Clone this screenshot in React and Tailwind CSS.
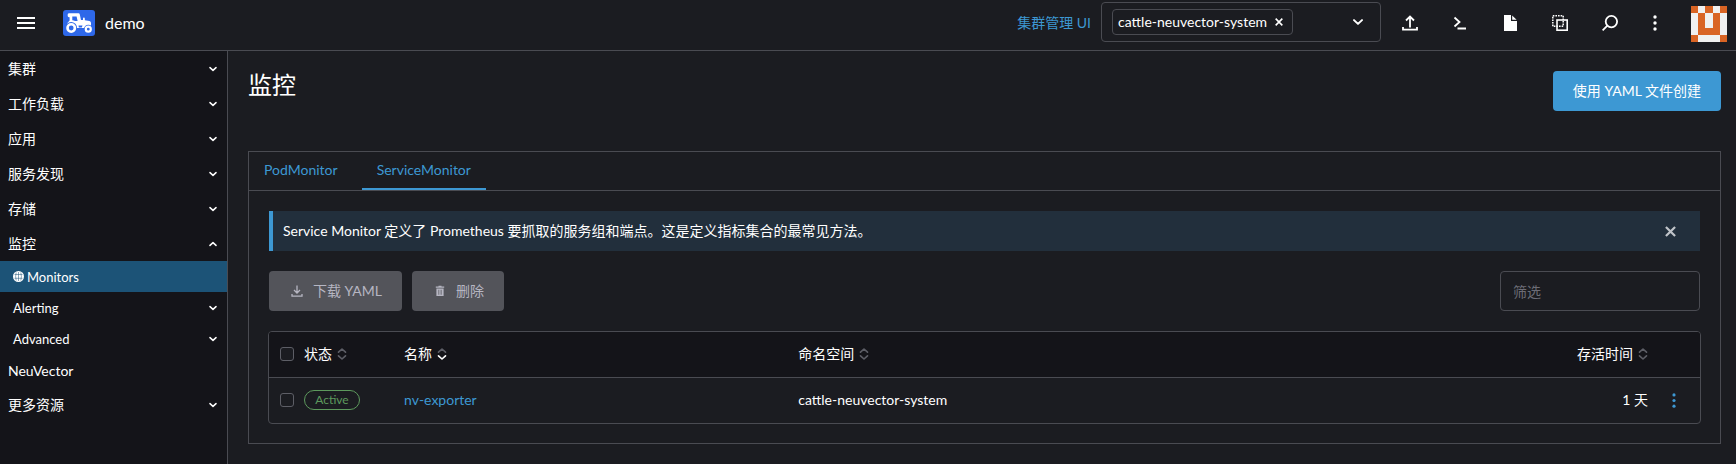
import { useState } from "react";

const navGroups = [
    { label: "集群" },
    { label: "工作负载" },
    { label: "应用" },
    { label: "服务发现" },
    { label: "存储" },
    {
        label: "监控",
        open: true,
        children: [
            { label: "Monitors", active: true },
            { label: "Alerting", expandable: true },
            { label: "Advanced", expandable: true },
        ],
    },
    { label: "NeuVector", leaf: true },
    { label: "更多资源" },
];

const rows = [
    { state: "Active", name: "nv-exporter", namespace: "cattle-neuvector-system", age: "1 天" },
];

function Chevron({ up, className }) {
    return (
        <svg className={className} viewBox="0 0 8 6" fill="none" stroke="currentColor" strokeWidth="1.5" strokeLinecap="round" strokeLinejoin="round">
            <path d={up ? "M1 4.4L4 1.6L7 4.4" : "M1 1.6L4 4.4L7 1.6"} />
        </svg>
    );
}

function CloseIcon({ className }) {
    return (
        <svg className={className} viewBox="0 0 12 12" fill="none" stroke="currentColor" strokeWidth="2.4">
            <path d="M1 1L11 11M11 1L1 11" />
        </svg>
    );
}

function SortIcon({ direction }) {
    return (
        <svg className="h-3 w-[10px] text-[#5d5e66]" viewBox="0 0 10 12" fill="none" strokeWidth="1.6" strokeLinecap="round" strokeLinejoin="round">
            <path stroke="currentColor" d="M1.5 4.2L5 1L8.5 4.2" />
            <path stroke={direction === "down" ? "#fff" : "currentColor"} d="M1.5 7.8L5 11L8.5 7.8" />
        </svg>
    );
}

function Dots({ className }) {
    return (
        <svg className={className} viewBox="0 0 4 16" fill="currentColor">
            <circle cx="2" cy="2" r="1.7" />
            <circle cx="2" cy="8" r="1.7" />
            <circle cx="2" cy="14" r="1.7" />
        </svg>
    );
}

function Logo() {
    return (
        <svg className="h-[26px] w-8" viewBox="0 0 32 26">
            <rect width="32" height="26" rx="3" fill="#2e68e9" />
            <path d="M6 3.3H15.5Q16.6 3.3 16.8 4.4L18 10H20V8.4Q20 7.6 20.9 7.6T21.8 8.4V10.2L26.5 11Q28 11.3 28 13V18H12L4 13.5L6.6 10.5V7.2H6Q4.6 7.2 4.6 5.2T6 3.3Z" fill="#fff" />
            <path d="M9.3 6.6H13.6L14.6 11H12Q10.8 10.2 9.3 10.2Z" fill="#2e68e9" />
            <path d="M15.5 15.5H19.5L18.8 17.5H15.8Z" fill="#2e68e9" />
            <circle cx="8.2" cy="18" r="5.9" fill="#2e68e9" />
            <circle cx="8.2" cy="18" r="3.7" fill="none" stroke="#fff" strokeWidth="2.6" />
            <circle cx="25.3" cy="19.2" r="4.4" fill="#2e68e9" />
            <circle cx="25.3" cy="19.2" r="2.5" fill="none" stroke="#fff" strokeWidth="2.2" />
        </svg>
    );
}

function Avatar() {
    return (
        <svg className="h-9 w-9" viewBox="0 0 36 36" shapeRendering="crispEdges">
            <rect width="36" height="36" fill="#f0f0f0" />
            <path fill="#d96424" d="M0 0H7V7H0ZM14 0H22V7H14ZM29 0H36V7H29ZM7 7H14V22H22V7H29V29H7ZM0 29H7V36H0ZM29 29H36V36H29Z" />
        </svg>
    );
}

const tools = [
    {
        label: "导入 YAML",
        icon: <path d="M8 12.5V2M4 5.5L8 1.5L12 5.5M1 12V14.6H15V12" fill="none" stroke="currentColor" strokeWidth="1.8" />,
    },
    {
        label: "Kubectl Shell",
        icon: <path d="M2.5 2.5L7.5 7L2.5 11.5M5.5 13.5H14" fill="none" stroke="currentColor" strokeWidth="1.8" />,
    },
    {
        label: "下载 KubeConfig",
        icon: <path d="M2 0H9V6H15V16H2ZM10.2 0.4L14.6 4.8H10.2Z" fill="currentColor" />,
    },
    {
        label: "复制 KubeConfig",
        icon: (
            <g fill="none" stroke="currentColor">
                <rect x="0.8" y="0.8" width="10.4" height="10.4" strokeWidth="1.5" strokeDasharray="1.6 1" />
                <rect x="5" y="5" width="10.2" height="10.2" strokeWidth="1.6" />
            </g>
        ),
    },
    {
        label: "资源搜索",
        icon: (
            <g fill="none" stroke="currentColor" strokeWidth="1.8">
                <circle cx="9.4" cy="6.6" r="5.7" />
                <path d="M5.4 10.6L0.6 15.4" />
            </g>
        ),
    },
];

function Header() {
    return (
        <header className="flex h-[51px] items-center border-b border-[#4a4b52] pr-[9px] pl-[17px]">
            <button type="button" aria-label="菜单" className="mb-1">
                <svg className="h-3 w-[18px]" viewBox="0 0 18 12" fill="currentColor">
                    <path d="M0 0H18V2H0ZM0 5H18V7H0ZM0 10H18V12H0Z" />
                </svg>
            </button>
            <a href="#home" className="mb-1 ml-7 flex items-center gap-[10px] text-base">
                <Logo />
                demo
            </a>

            <a href="#cluster" className="mb-1 ml-auto text-[#3d98d3]">集群管理 UI</a>

            {/* Namespace filter */}
            <div className="mb-[7px] ml-[10px] flex h-10 w-[280px] items-center rounded border border-[#4a4b52] pl-[10px]">
                <span className="flex h-[26px] items-center gap-2 rounded border border-[#4a4b52] px-[5px] whitespace-nowrap">
                    cattle-neuvector-system
                    <button type="button" aria-label="移除" className="pr-1">
                        <CloseIcon className="h-2 w-2" />
                    </button>
                </span>
                <select aria-label="命名空间" className="h-full min-w-0 flex-1 appearance-none bg-transparent">
                    <option value=""></option>
                    <option className="text-black" value="all">全部</option>
                </select>
                <Chevron className="pointer-events-none mr-4 h-2 w-3" />
            </div>

            <div className="mb-1 ml-[9px] flex items-center gap-[10px]">
                {tools.map((tool) => (
                    <button key={tool.label} type="button" aria-label={tool.label} className="flex h-10 w-10 items-center justify-center">
                        <svg className="h-4 w-4" viewBox="0 0 16 16">{tool.icon}</svg>
                    </button>
                ))}
            </div>
            <button type="button" aria-label="更多" className="mb-1 flex h-10 w-[50px] items-center justify-center">
                <Dots className="h-4 w-1" />
            </button>
            <button type="button" aria-label="用户" className="mb-[2px] ml-[11px]">
                <Avatar />
            </button>
        </header>
    );
}

function SideNav() {
    return (
        <nav className="w-[228px] shrink-0 border-r border-[#4a4b52] bg-[#141419]">
            {navGroups.map((group) => (
                <div key={group.label}>
                    {group.leaf ? (
                        <a href={"#" + group.label} className="flex h-[33px] items-center pl-2">{group.label}</a>
                    ) : (
                        <button type="button" className="flex h-[35px] w-full items-center justify-between pr-[10px] pl-2">
                            {group.label}
                            <Chevron up={group.open} className="h-[6px] w-2" />
                        </button>
                    )}
                    {group.children?.map((item) => (
                        <a
                            key={item.label}
                            href={"#" + item.label}
                            className={
                                item.active
                                    ? "flex h-[31px] items-center gap-[3px] bg-[#1c5377] pr-[10px] pl-[13px] text-[13px]"
                                    : "flex h-[31px] items-center justify-between pr-[10px] pl-[13px] text-[13px]"
                            }
                        >
                            {item.active && (
                                <svg className="h-[11px] w-[11px]" viewBox="0 0 11 11">
                                    <circle cx="5.5" cy="5.5" r="5.5" fill="#fff" />
                                    <path d="M1.5 3.5H9.5M1.5 7.3H9.5M5.5 1V10M3.2 1.5Q2 5.5 3.2 9.5M7.8 1.5Q9 5.5 7.8 9.5" stroke="#1c5377" strokeWidth="0.5" fill="none" />
                                </svg>
                            )}
                            {item.label}
                            {item.expandable && <Chevron className="h-[6px] w-2" />}
                        </a>
                    ))}
                </div>
            ))}
        </nav>
    );
}

function Checkbox({ label }) {
    return (
        <input
            type="checkbox"
            aria-label={label}
            className="block h-[14px] w-[14px] appearance-none rounded-[3px] border border-[#5d5e66] bg-[#1b1c21] checked:bg-[#3d98d3]"
        />
    );
}

function MonitorTable() {
    return (
        <div className="-mx-px mt-5 overflow-hidden rounded border border-[#4a4b52]">
            <table className="w-full table-fixed text-left">
                <thead className="bg-[#141419]">
                    <tr className="h-[45px] border-b border-[#4a4b52]">
                        <th className="w-[35px] pl-[11px]"><Checkbox label="全选" /></th>
                        <th className="w-[100px] font-normal">
                            <button type="button" className="flex items-center gap-[5px]">状态<SortIcon /></button>
                        </th>
                        <th className="font-normal">
                            <button type="button" className="flex items-center gap-[5px]">名称<SortIcon direction="down" /></button>
                        </th>
                        <th className="w-[51%] font-normal">
                            <button type="button" className="flex items-center gap-[5px]">命名空间<SortIcon /></button>
                        </th>
                        <th className="w-[120px] font-normal">
                            <button type="button" className="ml-auto flex items-center gap-[5px]">存活时间<SortIcon /></button>
                        </th>
                        <th className="w-[52px]"></th>
                    </tr>
                </thead>
                <tbody>
                    {rows.map((row) => (
                        <tr key={row.name} className="h-[46px]">
                            <td className="pl-[11px]"><Checkbox label={row.name} /></td>
                            <td>
                                <span className="flex h-5 w-14 items-center justify-center rounded-full border border-[#5d995d] text-xs text-[#5d995d]">{row.state}</span>
                            </td>
                            <td><a href="#nv-exporter" className="text-[#3d98d3]">{row.name}</a></td>
                            <td>{row.namespace}</td>
                            <td className="text-right">{row.age}</td>
                            <td>
                                <button type="button" aria-label="操作" className="mx-auto flex w-6 justify-center text-[#3d98d3]">
                                    <Dots className="h-[15px] w-1" />
                                </button>
                            </td>
                        </tr>
                    ))}
                </tbody>
            </table>
        </div>
    );
}

function App() {
    const [tab, setTab] = useState("ServiceMonitor");
    const [showBanner, setShowBanner] = useState(true);

    return (
        <div className="flex min-h-screen flex-col bg-[#1b1c21] font-['Lato','Noto_Sans_CJK_SC',sans-serif] text-sm leading-5 text-white">
            <Header />
            <div className="flex flex-1">
                <SideNav />
                <main className="min-w-0 flex-1 pt-5 pr-[15px] pb-5 pl-5">
                    <div className="flex items-start justify-between">
                        <h1 className="text-2xl leading-7">监控</h1>
                        <button type="button" className="h-10 rounded bg-[#3d98d3] px-5">使用 YAML 文件创建</button>
                    </div>

                    <section className="mt-10 border border-[#4a4b52]">
                        <div role="tablist" className="flex gap-[9px] border-b border-[#4a4b52]">
                            {["PodMonitor", "ServiceMonitor"].map((name) => (
                                <button
                                    key={name}
                                    type="button"
                                    role="tab"
                                    aria-selected={tab === name}
                                    onClick={() => setTab(name)}
                                    className={
                                        tab === name
                                            ? "h-[38px] border-b-2 border-[#3d98d3] px-[15px] text-[#3d98d3]"
                                            : "h-[38px] border-b-2 border-transparent px-[15px] text-[#3d98d3]"
                                    }
                                >
                                    {name}
                                </button>
                            ))}
                        </div>

                        <div className="p-5 pb-[19px]">
                            {showBanner && (
                                <div className="mb-5 flex h-10 items-center justify-between border-l-4 border-[#3d98d3] bg-[#222f3c] pr-6 pl-[10px]">
                                    <p>Service Monitor 定义了 Prometheus 要抓取的服务组和端点。这是定义指标集合的最常见方法。</p>
                                    <button type="button" aria-label="关闭" className="text-[#c0c4c9]" onClick={() => setShowBanner(false)}>
                                        <CloseIcon className="h-[11px] w-[11px]" />
                                    </button>
                                </div>
                            )}

                            <div className="flex items-center gap-[10px]">
                                <button type="button" disabled className="flex h-10 items-center gap-[10px] rounded bg-[#53545a] pr-5 pl-[22px] text-[#b6b6c2]">
                                    <svg className="h-3 w-3" viewBox="0 0 12 12" fill="none" stroke="currentColor" strokeWidth="1.3">
                                        <path d="M6 0.5V8M3 5L6 8L9 5M1 9V11.2H11V9" />
                                    </svg>
                                    下载 YAML
                                </button>
                                <button type="button" disabled className="flex h-10 items-center gap-[10px] rounded bg-[#53545a] pr-5 pl-[22px] text-[#b6b6c2]">
                                    <svg className="h-3 w-3" viewBox="0 0 12 12" fill="currentColor">
                                        <path d="M4.5 0.8H7.5V1.6H10.2V2.8H1.8V1.6H4.5Z" />
                                        <path fillRule="evenodd" d="M2.4 3.5H9.6V11H2.4ZM4.2 4.8V9.8H4.7V4.8ZM5.8 4.8V9.8H6.3V4.8ZM7.4 4.8V9.8H7.9V4.8Z" />
                                    </svg>
                                    删除
                                </button>
                                <input
                                    type="search"
                                    aria-label="筛选"
                                    placeholder="筛选"
                                    className="ml-auto h-10 w-[200px] rounded border border-[#4a4b52] bg-transparent px-3 placeholder:text-[#6c6c76]"
                                />
                            </div>

                            <MonitorTable />
                        </div>
                    </section>
                </main>
            </div>
        </div>
    );
}

export default App;
